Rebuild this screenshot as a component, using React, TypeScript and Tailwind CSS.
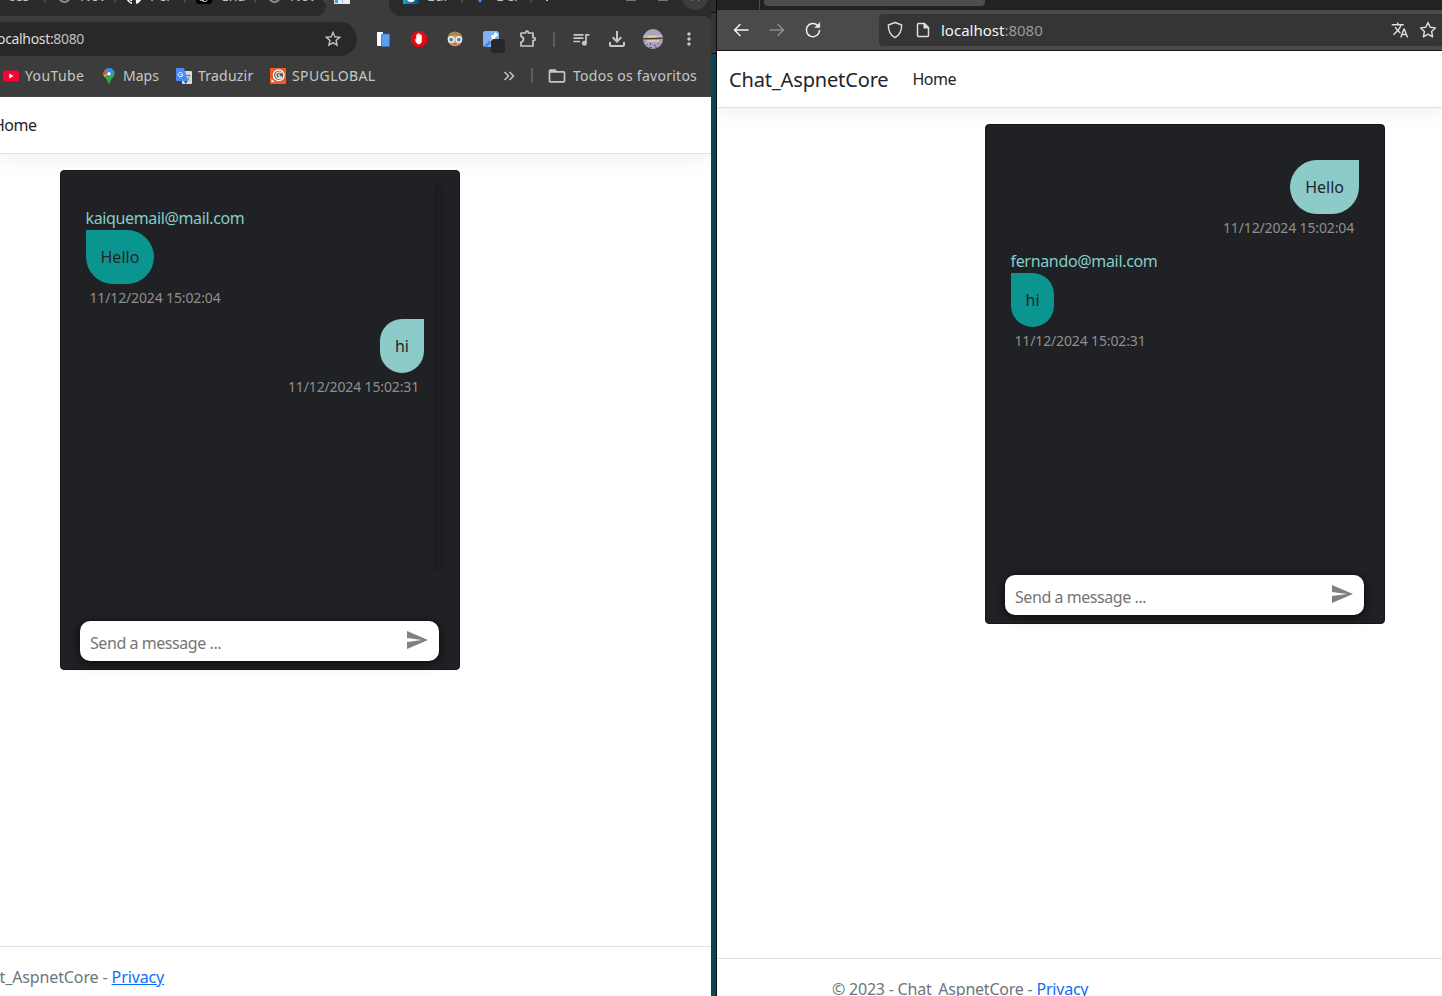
import type { ReactNode } from "react";
import {
  MdFolderOpen,
  MdMoreVert,
  MdOutlineFileDownload,
  MdQueueMusic,
  MdSend,
  MdStarBorder,
  MdTranslate,
} from "react-icons/md";
import { SiGithub, SiOpenai } from "react-icons/si";

type Message = { text: string; time: string; from?: string; tracking?: string };

function Tab({ icon, label }: { icon: ReactNode; label: string }) {
  return (
    <div className="flex w-[70px] shrink-0 items-center pl-[10px]">
      <span className="flex w-4 shrink-0 justify-center">{icon}</span>
      <span className="ml-[8px] w-[34px] shrink-0 overflow-hidden whitespace-nowrap text-[#c4c4c4]">{label}</span>
      <span className="h-[14px] w-[2px] shrink-0 bg-[#474747]" />
    </div>
  );
}

function Globe() {
  return <span className="block size-[13px] rounded-full border-2 border-[#8d9096]" />;
}

function TabStrip() {
  return (
    <div className="flex h-4 bg-[#3c3c3c] text-[14px] leading-5">
      <div className="h-4 w-[326px] overflow-hidden rounded-br-[10px] bg-[#2b2b2b]">
        <div className="-mt-[14px] flex h-5">
          <div className="flex w-[46px] shrink-0 items-center justify-between pl-[8px]">
            <span className="text-[#c4c4c4]">ces</span>
            <span className="h-[14px] w-[2px] bg-[#474747]" />
          </div>
          <Tab icon={<Globe />} label="Nov" />
          <Tab icon={<SiGithub className="size-4 text-white" />} label="Per" />
          <Tab
            icon={
              <span className="flex size-4 items-center justify-center rounded-[3px] bg-black">
                <SiOpenai className="size-3 text-white" />
              </span>
            }
            label="Cha"
          />
          <Tab icon={<Globe />} label="Nov" />
        </div>
      </div>
      <div className="h-4 w-[63px] overflow-hidden pl-[8px]">
        <div className="-mt-3 flex h-4 w-4 border border-[#dfe7ee] bg-[#e9eef2]">
          <span className="h-full w-[3px] bg-[#4aa0d8]" />
          <span className="ml-[4px] h-full w-px bg-[#aebfcc]" />
        </div>
      </div>
      <div className="h-4 w-[322px] overflow-hidden rounded-bl-[12px] bg-[#2b2b2b]">
        <div className="-mt-[14px] flex h-7">
          <div className="flex h-5 w-[74px] shrink-0 items-center pl-[14px]">
            <span className="flex size-4 shrink-0 items-end justify-center bg-gradient-to-r from-[#12a9d6] to-[#0c4a7c]">
              <span className="mb-[2px] h-[7px] w-[8px] rounded-full bg-white" />
            </span>
            <span className="ml-[8px] w-[34px] shrink-0 text-[#c4c4c4]">Eur</span>
            <span className="h-[14px] w-[2px] shrink-0 bg-[#474747]" />
          </div>
          <div className="flex h-5 w-[69px] shrink-0 items-center pl-[9px]">
            <svg viewBox="0 0 16 16" className="size-4 shrink-0">
              <path d="M8 0 14 7 8 15 2 7z" fill="#4687f0" />
            </svg>
            <span className="ml-[8px] w-[34px] shrink-0 text-[#c4c4c4]">Del</span>
            <span className="h-[14px] w-[2px] shrink-0 bg-[#474747]" />
          </div>
          <span className="ml-[14px] h-[15px] w-[2px] bg-[#c4c4c4]" />
          <span className="ml-[78px] mt-[13px] h-[2px] w-[10px] bg-[#777]" />
          <span className="ml-[22px] mt-[13px] h-[2px] w-[10px] bg-[#777]" />
          <span className="-mt-[2px] ml-[14px] flex size-[26px] items-center justify-center rounded-full bg-[#3d3d3d]">
            <svg viewBox="0 0 10 10" className="size-[9px]" stroke="#d0d0d0" strokeWidth="1.600">
              <path d="M1 0l8 8M9 0l-8 8" />
            </svg>
          </span>
        </div>
      </div>
    </div>
  );
}

function Cell({ children }: { children: ReactNode }) {
  return <div className="flex w-9 shrink-0 items-center justify-center">{children}</div>;
}

function ChromeToolbar() {
  return (
    <div className="bg-[#2b2b2b]">
      <div className="flex h-[40px] rounded-tr-[8px] bg-[#3c3c3c] pt-[6px] text-[#c7c7c7]">
        <div className="flex h-[34px] w-[357px] shrink-0 items-center justify-between rounded-r-full bg-[#282828] pr-[14px]">
          <span className="-ml-[3px] mb-[1px] text-[14px] tracking-[-0.33px] text-[#dcdcdc]">
            ocalhost:<span className="text-[#c0c0c0]">8080</span>
          </span>
          <MdStarBorder className="mb-[1px] size-5" />
        </div>
        <div className="ml-[8px] flex h-[34px] items-center">
          <Cell>
            <svg viewBox="0 0 16 16" className="size-4">
              <path d="M2 1h6v2L6.500 4.500V15H3a1 1 0 0 1-1-1z" fill="#fff" />
              <rect x="6.500" y="3" width="8" height="12.500" rx="1" fill="#5c9df5" stroke="#3877d6" strokeWidth=".7" />
            </svg>
          </Cell>
          <Cell>
            <svg viewBox="0 0 16 16" className="size-4">
              <path d="M4.700 0h6.600L16 4.700v6.600L11.300 16H4.700L0 11.300V4.700z" fill="#e10b12" />
              <path
                d="M4.200 8.600c.6-.5 1 0 1.300.6V4.200c0-.9 1.200-.9 1.200 0V3.100c0-.9 1.300-.9 1.300 0v.5c0-.9 1.300-.9 1.300 0v1c0-.8 1.300-.8 1.300 0v5.200c0 2-1.200 3.200-2.900 3.200-1.900 0-2.500-1.300-3.500-4.400z"
                fill="#fff"
                stroke="#fff"
                strokeWidth=".5"
              />
            </svg>
          </Cell>
          <Cell>
            <svg viewBox="0 0 16 16" className="size-4">
              <circle cx="8" cy="8" r="7.300" fill="#d4906e" />
              <path d="M.7 7C1 3 4 .8 8 .8S15 3 15.300 7L12 5 8 4 4 5z" fill="#a98653" />
              <circle cx="4.200" cy="8.600" r="2.700" fill="#4f8b94" stroke="#e4f0f0" strokeWidth="1.600" />
              <circle cx="11.800" cy="8.600" r="2.700" fill="#4f8b94" stroke="#e4f0f0" strokeWidth="1.600" />
              <path d="M6.500 13h3" stroke="#a55b4b" />
            </svg>
          </Cell>
          <Cell>
            <svg viewBox="0 0 24 24" className="-mb-[6px] ml-[6px] size-6 shrink-0">
              <rect x="1" y="1" width="16" height="16" rx="2.500" fill="#7fb2f5" />
              <path d="M2 16 9 9l2 2-6 6z" fill="#4c84d8" />
              <path d="M9 5l2 .5L13.500 2l2.800 3-3.300 2.800.5 2.600-2.500-.6-2 2-1-1 1.800-2z" fill="#fff" />
              <rect x="9" y="9" width="14" height="14" rx="3" fill="#272727" />
            </svg>
          </Cell>
          <Cell>
            <svg viewBox="0 0 18 18" className="mb-[1px] ml-[2px] size-[18px]" fill="none" stroke="#c7c7c7" strokeWidth="1.700">
              <path
                d="M2 3h4.600V2.500a1.400 1.400 0 0 1 2.800 0V3H14v4.700h.8a1.400 1.400 0 0 1 0 2.800H14V16H2v-4c3.300-.6 3.300-5 0-5.600z"
                strokeLinejoin="round"
              />
            </svg>
          </Cell>
          <div className="flex w-[18px] justify-center">
            <span className="h-[15px] w-[2px] bg-[#5c5c5c]" />
          </div>
          <Cell>
            <MdQueueMusic className="mb-[1px] size-5" />
          </Cell>
          <Cell>
            <MdOutlineFileDownload className="mb-[1px] size-6" />
          </Cell>
          <Cell>
            <svg viewBox="0 0 20 20" className="size-5">
              <defs>
                <clipPath id="avatar">
                  <circle cx="10" cy="10" r="10" />
                </clipPath>
              </defs>
              <g clipPath="url(#avatar)">
                <path d="M0 0h20v20H0z" fill="#a9a5c0" />
                <path d="M0 6h20v3H0z" fill="#cfb3ac" />
                <path d="M5 7h9v2H5z" fill="#efd3a5" />
                <path d="M0 9l20-.6v1.600L0 10.600z" fill="#46453a" />
                <path d="M4 11h12v2H4z" fill="#d9c3b4" />
                <path d="M4 15h1v1H4zM7 14h1v2H7zM11 16h2v1h-2zM15 14h1v1h-1zM6 18h3v1H6zM12 18h2v1h-2z" fill="#57597c" />
              </g>
            </svg>
          </Cell>
          <Cell>
            <MdMoreVert className="mb-[1px] size-5" />
          </Cell>
        </div>
      </div>
    </div>
  );
}

function Bookmark({ icon, children }: { icon: ReactNode; children: ReactNode }) {
  return (
    <div className="flex shrink-0 items-center gap-[6px]">
      {icon}
      {children}
    </div>
  );
}

function BookmarksBar() {
  return (
    <div className="flex h-[41px] items-center border-b border-[#474747] bg-[#3c3c3c] pb-[1px] pl-[3px] text-[14px] text-[#c7c7c7]">
      <div className="w-[98px]">
        <Bookmark
          icon={
            <svg viewBox="0 0 16 16" className="size-4">
              <rect y="2.500" width="16" height="11" rx="2.500" fill="#ff0033" />
              <path d="M6.300 5.600v4.800L10.600 8z" fill="#fff" />
            </svg>
          }
        >
          <span className="tracking-[0.4px]">YouTube</span>
        </Bookmark>
      </div>
      <div className="w-[75px]">
        <Bookmark
          icon={
            <svg viewBox="0 0 16 16" className="size-4">
              <defs>
                <clipPath id="pin">
                  <path d="M8 0a5.600 5.600 0 0 1 5.600 5.600c0 3.600-3.800 5-5 10h-1.200c-1.200-5-5-6.400-5-10A5.600 5.600 0 0 1 8 0z" />
                </clipPath>
              </defs>
              <g clipPath="url(#pin)">
                <path d="M0 0h16v16H0z" fill="#34a853" />
                <path d="M0 12 8 5 5 3 0 6z" fill="#fbbc04" />
                <path d="M0 0h5l3 5-5 2H0z" fill="#ea4335" />
                <path d="M4 0h12v3L8 8 4 3z" fill="#4285f4" />
              </g>
              <circle cx="8" cy="5.700" r="1.700" fill="#fff" />
            </svg>
          }
        >
          <span>Maps</span>
        </Bookmark>
      </div>
      <div className="w-[94px]">
        <Bookmark
          icon={
            <svg viewBox="0 0 16 16" className="size-4">
              <rect x="6" y="3" width="10" height="13" rx="1" fill="#dcdcdc" />
              <path d="M9 7.500h5.500M11.800 6v1.500M13.500 7.500c-.5 2.500-2 4-3.500 5M10.200 9c.8 1.500 2 2.700 3.600 3.500" fill="none" stroke="#70808c" strokeWidth=".9" />
              <path d="M8 13h4l-2.500 3z" fill="#2a4fc0" />
              <path d="M1 0h7l4 13H1a1 1 0 0 1-1-1V1a1 1 0 0 1 1-1z" fill="#4a8af4" />
              <path d="M6.300 5.200a2.200 2.200 0 1 0 .5 1.500H4.800" fill="none" stroke="#fff" strokeWidth="1" />
            </svg>
          }
        >
          <span className="tracking-[0.22px]">Traduzir</span>
        </Bookmark>
      </div>
      <div className="w-[233px]">
        <Bookmark
          icon={
            <svg viewBox="0 0 16 16" className="size-4" fill="none">
              <path d="M0 0h16v16H0z" fill="#f15a24" />
              <circle cx="8.700" cy="7.300" r="5.300" fill="#6c5b54" stroke="#fff" strokeWidth="1.300" />
              <path d="M11.500 5a3.300 3.300 0 1 0 0 4.600M9 5.500v3.500h3" stroke="#fff" strokeWidth="1.100" />
              <path d="M1.500 11l3 3h-3z" fill="#fff" />
            </svg>
          }
        >
          <span className="tracking-[0.4px]">SPUGLOBAL</span>
        </Bookmark>
      </div>
      <svg viewBox="0 0 12 12" className="size-3" fill="none" stroke="#c7c7c7" strokeWidth="1.500">
        <path d="M1.500 2l4 4-4 4M6.500 2l4 4-4 4" />
      </svg>
      <span className="ml-[16px] h-[15px] w-[2px] bg-[#5c5c5c]" />
      <MdFolderOpen className="ml-[14px] size-[20px]" />
      <span className="ml-[6px] whitespace-nowrap tracking-[0.26px]">Todos os favoritos</span>
    </div>
  );
}

function Bubble({ m }: { m: Message }) {
  const received = Boolean(m.from);
  return (
    <div className={received ? "flex flex-col items-start" : "flex flex-col items-end"}>
      {m.from && <span className={`-ml-[0.5px] h-6 leading-6 text-[#86cccb] ${m.tracking}`}>{m.from}</span>}
      <div
        className={
          received
            ? "h-[54px] rounded-[30px] rounded-tl-none bg-[#0b9591] p-[15px] pl-[14.5px] pr-[14.5px] leading-6 text-[#212529]"
            : "h-[54px] rounded-[30px] rounded-tr-none bg-[#8ccbca] p-[15px] leading-6 text-[#212529]"
        }
      >
        {m.text}
      </div>
      <span className="mb-[11px] mt-[3px] h-[21px] pl-[3.5px] pr-[5px] text-[14px] leading-[21px] tracking-[-0.14px] text-[#8e8f90]">
        {m.time}
      </span>
    </div>
  );
}

function Chat({ messages, scrollbar }: { messages: Message[]; scrollbar?: boolean }) {
  return (
    <div className="flex h-[500px] w-[400px] flex-col rounded-[4px] border border-[#16171a] bg-[#202124] pl-[25px] pt-[15px]">
      <div className={scrollbar ? "flex h-[384px] pr-[15px]" : "flex h-[384px] pr-[25px]"}>
        <div className="flex-1 pt-5">
          {messages.map((m) => (
            <Bubble key={m.time} m={m} />
          ))}
        </div>
        {scrollbar && (
          <div className="ml-[10px] h-full w-[10px] rounded-[5px] bg-[#1f2022] shadow-[inset_0_0_4px_rgba(0,0,0,0.3)]" />
        )}
      </div>
      <div className="-ml-[6px] mt-[51px] flex h-10 w-[359px] shrink-0 items-center justify-between rounded-[10px] bg-white pl-[10px] pr-[10px] shadow-[0_1px_8px_rgba(0,0,0,0.75),0_8px_14px_rgba(0,0,0,0.05)]">
        <span className="mt-[3px] tracking-[-0.44px] text-[#757575]">Send a message ...</span>
        <MdSend className="mb-[2px] size-6 text-[#808080]" />
      </div>
    </div>
  );
}

function ChromeWindow() {
  return (
    <section className="flex h-full w-[711px] shrink-0 flex-col overflow-hidden bg-white">
      <TabStrip />
      <ChromeToolbar />
      <BookmarksBar />
      <nav className="h-[57px] shrink-0 border-b border-[#dee2e6] pt-[16px] leading-6 shadow-[0_8px_16px_rgba(0,0,0,0.05)]">
        <span className="-ml-[7px] tracking-[-0.5px] text-[#212529]">Home</span>
      </nav>
      <main className="flex-1 pl-[60px] pt-4">
        <Chat
          scrollbar
          messages={[
            { from: "kaiquemail@mail.com", text: "Hello", time: "11/12/2024 15:02:04", tracking: "tracking-[-0.36px]" },
            { text: "hi", time: "11/12/2024 15:02:31" },
          ]}
        />
      </main>
      <footer className="h-[50px] shrink-0 whitespace-nowrap border-t border-[#dee2e6] pt-[18px] leading-6 tracking-[-0.12px] text-[#6c757d]">
        <span className="-ml-[0.5px]">t_AspnetCore - </span>
        <a className="text-[#0d6efd] underline">Privacy</a>
      </footer>
    </section>
  );
}

function FirefoxWindow() {
  return (
    <section className="flex h-full flex-1 flex-col overflow-hidden bg-white">
      <div className="flex h-[10px] shrink-0 bg-[#222]">
        <span className="ml-[42px] h-full w-px bg-[#4a4a4a]" />
        <span className="ml-[4px] h-[6px] w-[221px] rounded-b-[4px] bg-[#4d4d4d]" />
      </div>
      <div className="flex h-[41px] shrink-0 items-center border-b border-[#161616] bg-[#4a4a4a] pl-[15px] text-[#f2f2f2]">
        <svg viewBox="0 0 18 18" className="size-[18px]" fill="none" stroke="currentColor" strokeWidth="1.500" strokeLinecap="round">
          <path d="M16 9H3M8 3.500 2.500 9 8 14.500" />
        </svg>
        <svg viewBox="0 0 18 18" className="ml-[18px] size-[18px] text-[#8c8c8c]" fill="none" stroke="currentColor" strokeWidth="1.500" strokeLinecap="round">
          <path d="M2 9h13M10 3.500 15.500 9 10 14.500" />
        </svg>
        <svg viewBox="0 0 18 18" className="ml-[18px] size-[18px]" fill="none" stroke="currentColor" strokeWidth="1.500" strokeLinecap="round">
          <path d="M15.500 9.500a6.600 6.600 0 1 1-2-5.200" />
          <path d="M15.800 1.800v4.700h-4.700z" fill="currentColor" strokeWidth=".5" />
        </svg>
        <div className="ml-[57px] flex h-8 flex-1 items-center rounded-l-[4px] bg-[#353535] pl-[7px] pr-[5px]">
          <svg viewBox="0 0 18 18" className="size-[18px]" fill="none" stroke="#dedede" strokeWidth="1.400" strokeLinejoin="round">
            <path d="M9 1.500 15.700 4c0 5.800-1.500 10-6.700 12.700C3.800 14 2.300 9.800 2.300 4z" />
          </svg>
          <svg viewBox="0 0 16 16" className="ml-[11px] size-4" fill="none" stroke="#dedede" strokeWidth="1.500" strokeLinejoin="round">
            <path d="M3.500 1.500h5.800l4.200 4.200v7.800a1 1 0 0 1-1 1h-9a1 1 0 0 1-1-1v-11a1 1 0 0 1 1-1z" />
            <path d="M9.200 1.500v4.300h4.300z" fill="#dedede" />
          </svg>
          <span className="ml-[10px] flex-1 text-[15px] text-[#f4f4f4]">
            localhost<span className="text-[#9a9a9a]">:8080</span>
          </span>
          <MdTranslate className="size-[18px] text-[#dedede]" />
          <svg viewBox="0 0 18 18" className="ml-[10px] size-[18px]" fill="none" stroke="#dedede" strokeWidth="1.400" strokeLinejoin="round">
            <path d="M9 1.500l2.200 4.800 5.200.6-3.800 3.600 1 5.300L9 13.200l-4.600 2.600 1-5.300L1.600 6.900l5.200-.6z" />
          </svg>
        </div>
      </div>
      <nav className="flex h-[57px] shrink-0 items-center border-b border-[#dee2e6] pl-[12px] text-[#212529] shadow-[0_8px_16px_rgba(0,0,0,0.05)]">
        <span className="mt-[2px] text-[20px] tracking-[-0.15px]">Chat_AspnetCore</span>
        <span className="ml-[24px] tracking-[-0.5px]">Home</span>
      </nav>
      <main className="flex-1 pl-[268px] pt-4">
        <Chat
          messages={[
            { text: "Hello", time: "11/12/2024 15:02:04" },
            { from: "fernando@mail.com", text: "hi", time: "11/12/2024 15:02:31", tracking: "tracking-[-0.33px]" },
          ]}
        />
      </main>
      <footer className="h-[38px] shrink-0 overflow-hidden whitespace-nowrap border-t border-[#dee2e6] pl-[115px] pt-[18px] leading-6 tracking-[-0.22px] text-[#6c757d]">
        © 2023 - Chat_AspnetCore - <a className="text-[#0d6efd] underline">Privacy</a>
      </footer>
    </section>
  );
}

export default function App() {
  return (
    <div className="flex h-[996px] w-[1442px] overflow-hidden font-['Noto_Sans',sans-serif] text-[16px]">
      <ChromeWindow />
      <div className="flex w-[6px] shrink-0 flex-col border-r border-[#0a0a0a]">
        <div className="h-[13px] border-b border-[#151515] bg-[#2e2e2e]" />
        <div className="h-[41px] border-b border-[#151515] bg-[#363636]" />
        <div className="flex-1 bg-[#06485c]" />
      </div>
      <FirefoxWindow />
    </div>
  );
}
